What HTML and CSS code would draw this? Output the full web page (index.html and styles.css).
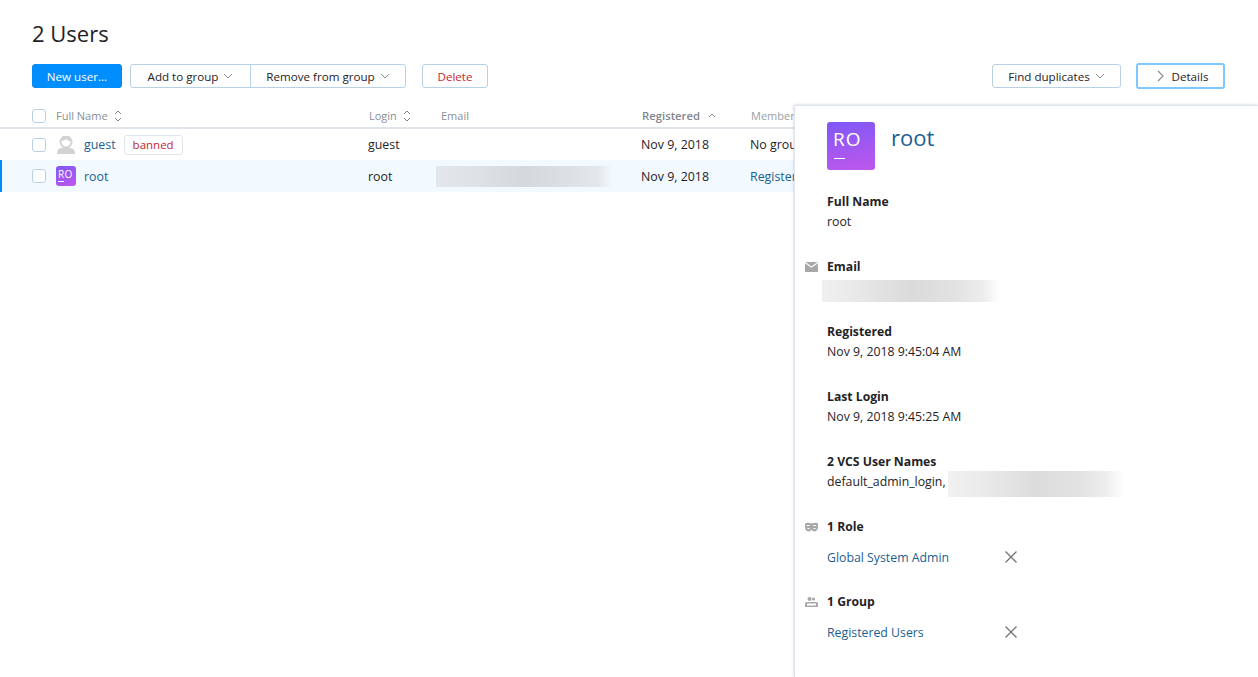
FILE: index.html
```html
<!DOCTYPE html>
<html>
<head>
    <title>2 Users</title>
    <meta charset="UTF-8">
    <link rel="stylesheet" href="styles.css">
</head>
<body>
    <div id="wrapper">
        <h1 class="pageTitle">2 Users</h1>

        <div class="toolbar">
            <div class="btn btnPrimary">New user...</div>
            <div class="btnGroup">
                <div class="btn">Add to group <svg class="caret" viewBox="0 0 10 6"><path d="M1 1l4 4 4-4"/></svg></div>
                <div class="btn">Remove from group <svg class="caret" viewBox="0 0 10 6"><path d="M1 1l4 4 4-4"/></svg></div>
            </div>
            <div class="btn btnDanger">Delete</div>
            <div class="toolbarRight">
                <div class="btn">Find duplicates <svg class="caret" viewBox="0 0 10 6"><path d="M1 1l4 4 4-4"/></svg></div>
                <div class="btn btnFocus"><svg class="chevron" viewBox="0 0 7 12"><path d="M1 1l5 5-5 5"/></svg> Details</div>
            </div>
        </div>

        <div class="userTable">
            <div class="row headRow">
                <div class="cellCheck"><span class="check"></span></div>
                <div class="headCell">Full Name
                    <svg class="sortIcon" viewBox="0 0 8 12"><path d="M1 4l3-3 3 3M1 8l3 3 3-3"/></svg>
                </div>
                <div class="headCell headShift">Login
                    <svg class="sortIcon" viewBox="0 0 8 12"><path d="M1 4l3-3 3 3M1 8l3 3 3-3"/></svg>
                </div>
                <div class="headCell headEmail">Email</div>
                <div class="headCell headActive headShift">Registered
                    <svg class="sortUp" viewBox="0 0 8 5"><path d="M1 4l3-3 3 3"/></svg>
                </div>
                <div class="headCell headMember headShift">Member</div>
            </div>
            <div class="row">
                <div class="cellCheck"><span class="check"></span></div>
                <div class="cellName">
                    <svg class="avatarGuest" viewBox="0 0 18 18">
                        <path d="M0 18c0-3.500 1-5 4-6h10c3 1 4 2.500 4 6-2 1-16 1-18 0z" fill="#d2d2d2"/>
                        <circle cx="9" cy="6" r="5.500" fill="#fff" stroke="#d2d2d2" stroke-width="2"/>
                        <path d="M3.500 5c2 0 4-.500 5.500-2 1 1.500 3 2 5.500 2-.3-3-2.500-5-5.500-5s-5.200 2-5.500 5z" fill="#d2d2d2"/>
                    </svg>
                    <a class="userLink">guest</a>
                    <span class="bannedTag">banned</span>
                </div>
                <div>guest</div>
                <div></div>
                <div>Nov 9, 2018</div>
                <div>No groups</div>
            </div>
            <div class="row rowSelected">
                <div class="cellCheck"><span class="check"></span></div>
                <div class="cellName">
                    <span class="avatarSmall">RO<i></i></span>
                    <a class="userLink">root</a>
                </div>
                <div>root</div>
                <div><div class="blurBox blurRow"></div></div>
                <div>Nov 9, 2018</div>
                <div class="memberLink">Registered Users</div>
            </div>
        </div>
    </div>

    <div id="detailsPanel">
        <div class="panelHead">
            <div class="avatarBig">RO<i></i></div>
            <div class="panelName">root</div>
        </div>

        <div class="section">
            <div class="label">Full Name</div>
            <div class="value">root</div>
        </div>

        <div class="section">
            <svg class="sectionIcon" viewBox="0 0 13 10">
                <path d="M0 1.200V10h13V1.200L6.500 5.800z" fill="#a8a8a8"/>
                <path d="M.5 0h12L6.500 4.400z" fill="#a8a8a8"/>
            </svg>
            <div class="label">Email</div>
            <div class="blurBox blurEmail"></div>
        </div>

        <div class="section">
            <div class="label">Registered</div>
            <div class="value">Nov 9, 2018 9:45:04 AM</div>
        </div>

        <div class="section">
            <div class="label">Last Login</div>
            <div class="value">Nov 9, 2018 9:45:25 AM</div>
        </div>

        <div class="section">
            <div class="label">2 VCS User Names</div>
            <div class="value vcsLine">default_admin_login,<div class="blurBox blurVcs"></div></div>
        </div>

        <div class="section">
            <svg class="sectionIcon" viewBox="0 0 13 10">
                <path d="M0 1.500C1.500.500 4.500.500 6.500 1.500 8.500.500 11.500.500 13 1.500v4c-.5 2.500-1.800 4-3.500 4-1.300 0-2.300-.7-3-2-.7 1.300-1.700 2-3 2-1.700 0-3-1.500-3.500-4z" fill="#a8a8a8"/>
                <path d="M1.800 3.500h3M8.200 3.500h3M2.500 6.500h2M8.500 6.500h2" stroke="#fff" stroke-width="1"/>
            </svg>
            <div class="label">1 Role</div>
            <div class="listRow">
                <a class="panelLink">Global System Admin</a>
                <svg class="removeIcon" viewBox="0 0 12 12"><path d="M.5.500l11 11M11.500.500l-11 11"/></svg>
            </div>
        </div>

        <div class="section">
            <svg class="sectionIcon" viewBox="0 0 13 10">
                <circle cx="4.500" cy="2" r="2" fill="#a8a8a8"/>
                <circle cx="8.500" cy="2" r="1.600" fill="#a8a8a8"/>
                <path d="M0 10V6.500C0 5.500 1 5 2.500 5h8C12 5 13 5.500 13 6.500V10zM2 8.500h9V6.500H2z" fill="#a8a8a8" fill-rule="evenodd"/>
            </svg>
            <div class="label">1 Group</div>
            <div class="listRow">
                <a class="panelLink">Registered Users</a>
                <svg class="removeIcon" viewBox="0 0 12 12"><path d="M.5.500l11 11M11.500.500l-11 11"/></svg>
            </div>
        </div>
    </div>
</body>
</html>
```

FILE: styles.css
```css
html, body {
    margin: 0;
    padding: 0;
    height: 100%;
    overflow: hidden;
}

body {
    font-family: "Open Sans", "Noto Sans", sans-serif;
    font-size: 12px;
    color: #1f2326;
    background-color: #fff;
    position: relative;
}

.pageTitle {
    margin: 0;
    padding: 17px 32px 0;
    font-size: 22px;
    font-weight: 400;
    line-height: 33px;
    color: #1f2326;
}

.toolbar {
    display: flex;
    align-items: center;
    margin-top: 13px;
    padding: 0 33px 0 32px;
    height: 26px;
}

.btn {
    box-sizing: border-box;
    display: flex;
    align-items: center;
    justify-content: center;
    height: 24px;
    padding: 0 15px;
    border: 1px solid #b8d1e6;
    border-radius: 3px;
    white-space: nowrap;
    font-size: 11.6px;
    color: #1f2326;
}

.btnPrimary {
    width: 90px;
    margin-right: 8px;
    padding: 0;
    background-color: #008eff;
    border-color: #008eff;
    color: #fff;
    font-weight: 500;
}

.btnGroup {
    display: flex;
}

.btnGroup .btn:first-child {
    width: 121px;
    padding: 0;
    border-radius: 3px 0 0 3px;
}

.btnGroup .btn:last-child {
    width: 156px;
    padding: 0;
    margin-left: -1px;
    border-radius: 0 3px 3px 0;
}

.btnDanger {
    width: 66px;
    margin-left: 16px;
    padding: 0;
    color: #c22731;
}

.toolbarRight {
    margin-left: auto;
    display: flex;
    align-items: center;
    gap: 15px;
}

.toolbarRight .btn:first-child {
    width: 129px;
    padding: 0;
}

.btnFocus {
    width: 89px;
    height: 26px;
    padding: 0 0 0 4px;
    border: 2px solid #80c6ff;
}

.caret {
    width: 10px;
    height: 6px;
    margin-left: 5px;
    fill: none;
    stroke: #8a8f94;
    stroke-width: 1;
}

.chevron {
    width: 7px;
    height: 12px;
    margin-right: 8px;
    fill: none;
    stroke: #8a8f94;
    stroke-width: 1.2;
}

.userTable {
    margin-top: 15px;
}

.row {
    display: grid;
    grid-template-columns: 24px 312px 68px 205px 109px 1fr;
    align-items: center;
    height: 32px;
    padding-left: 32px;
    box-sizing: border-box;
    font-size: 12.4px;
    white-space: nowrap;
    overflow: hidden;
}

.headRow {
    height: 25px;
    border-bottom: 2px solid #dfe5eb;
    font-size: 11px;
    color: #8a8f94;
}

.headRow + .row {
    height: 31px;
}

.rowSelected {
    background-color: #f2f9ff;
    box-shadow: inset 2px 0 0 #008eff;
}

.cellName, .cellCheck, .headCell {
    display: flex;
    align-items: center;
}

.check {
    box-sizing: border-box;
    display: block;
    width: 14px;
    height: 14px;
    border: 1px solid #b8d1e6;
    border-radius: 3px;
    background-color: #fff;
}

.sortIcon {
    width: 8px;
    height: 12px;
    margin-left: 6px;
    fill: none;
    stroke: #7f868c;
    stroke-width: 1;
}

.sortUp {
    width: 8px;
    height: 5px;
    margin-left: 8px;
    fill: none;
    stroke: #8a8f94;
    stroke-width: 1;
}

.headEmail {
    padding-left: 5px;
}

.headShift {
    padding-left: 1px;
}

.headActive {
    font-size: 11.3px;
    font-weight: 600;
    color: #7f868c;
}

.headMember {
    color: #9aa0a6;
}

.avatarGuest {
    width: 18px;
    height: 18px;
    margin: 0 9px 0 1px;
}

.userLink {
    color: #1a5f92;
}

.bannedTag {
    box-sizing: border-box;
    height: 20px;
    line-height: 18px;
    margin-left: 8px;
    padding: 0 8px;
    border: 1px solid #dfe5eb;
    border-radius: 3px;
    background-color: #fff;
    font-size: 11.5px;
    color: #c22731;
}

.avatarSmall {
    position: relative;
    box-sizing: border-box;
    width: 20px;
    height: 20px;
    margin-right: 8px;
    padding: 2px 0 0 2px;
    border-radius: 3px;
    background: linear-gradient(160deg, #8158f5, #bd57ee);
    color: #fff;
    font-size: 10px;
    line-height: 12px;
    letter-spacing: 0.3px;
}

.avatarSmall i {
    position: absolute;
    left: 2px;
    bottom: 4px;
    width: 6px;
    height: 1px;
    background-color: #fff;
}

.memberLink {
    color: #1a5f92;
}

.blurBox {
    background: linear-gradient(90deg, #e3e6ea 0%, #dde0e5 25%, #d4d7dc 50%, #dcdfe4 75%, #e4e7ea 92%, rgba(240, 245, 250, 0) 100%);
}

.blurRow {
    width: 176px;
    height: 21px;
}

.blurEmail {
    width: 178px;
    height: 22px;
    margin: 3px 0 -5px -5px;
    background: linear-gradient(90deg, #f0f0f0 0%, #e6e6e6 25%, #dadada 50%, #e2e2e2 75%, #ececec 90%, #fff 100%);
}

.blurVcs {
    flex: none;
    width: 176px;
    height: 26px;
    margin: 4px 0 0 2px;
    background: linear-gradient(90deg, #f1f1f1 0%, #e8e8e8 25%, #dcdcdc 50%, #e2e2e2 75%, #eeeeee 90%, #fff 100%);
}

#detailsPanel {
    position: absolute;
    top: 105px;
    left: 794px;
    right: 0;
    bottom: 0;
    box-sizing: border-box;
    padding: 16px 0 0 32px;
    background-color: #fff;
    border-left: 1px solid #dfe5eb;
    border-top: 1px solid #dfe5eb;
    box-shadow: 0 0 3px rgba(120, 140, 160, 0.4);
    font-size: 12.3px;
}

.panelHead {
    display: flex;
    margin-bottom: 22px;
}

.avatarBig {
    position: relative;
    box-sizing: border-box;
    width: 48px;
    height: 48px;
    padding: 7px 0 0 6px;
    border-radius: 3px;
    background: linear-gradient(170deg, #7f58f6, #bf57ec);
    color: #fff;
    font-size: 19px;
    line-height: 20px;
    letter-spacing: 1px;
}

.avatarBig i {
    position: absolute;
    left: 7px;
    bottom: 11px;
    width: 11px;
    height: 1px;
    background-color: #fff;
}

.panelName {
    margin-left: 16px;
    font-size: 22px;
    line-height: 30px;
    color: #1a5f92;
}

.section {
    position: relative;
    min-height: 40px;
    margin-bottom: 25px;
}

.label {
    font-size: 12.2px;
    font-weight: 700;
    line-height: 20px;
    color: #1f2326;
}

.value {
    line-height: 20px;
    color: #1f2326;
}

.vcsLine {
    display: flex;
    align-items: center;
    height: 20px;
}

.sectionIcon {
    position: absolute;
    left: -22px;
    top: 5px;
    width: 13px;
    height: 10px;
}

.listRow {
    display: flex;
    align-items: center;
    height: 20px;
    margin-top: 10px;
}

.panelLink {
    width: 178px;
    color: #1a5f92;
}

.removeIcon {
    width: 12px;
    height: 12px;
    fill: none;
    stroke: #737373;
    stroke-width: 1.3;
}
```
